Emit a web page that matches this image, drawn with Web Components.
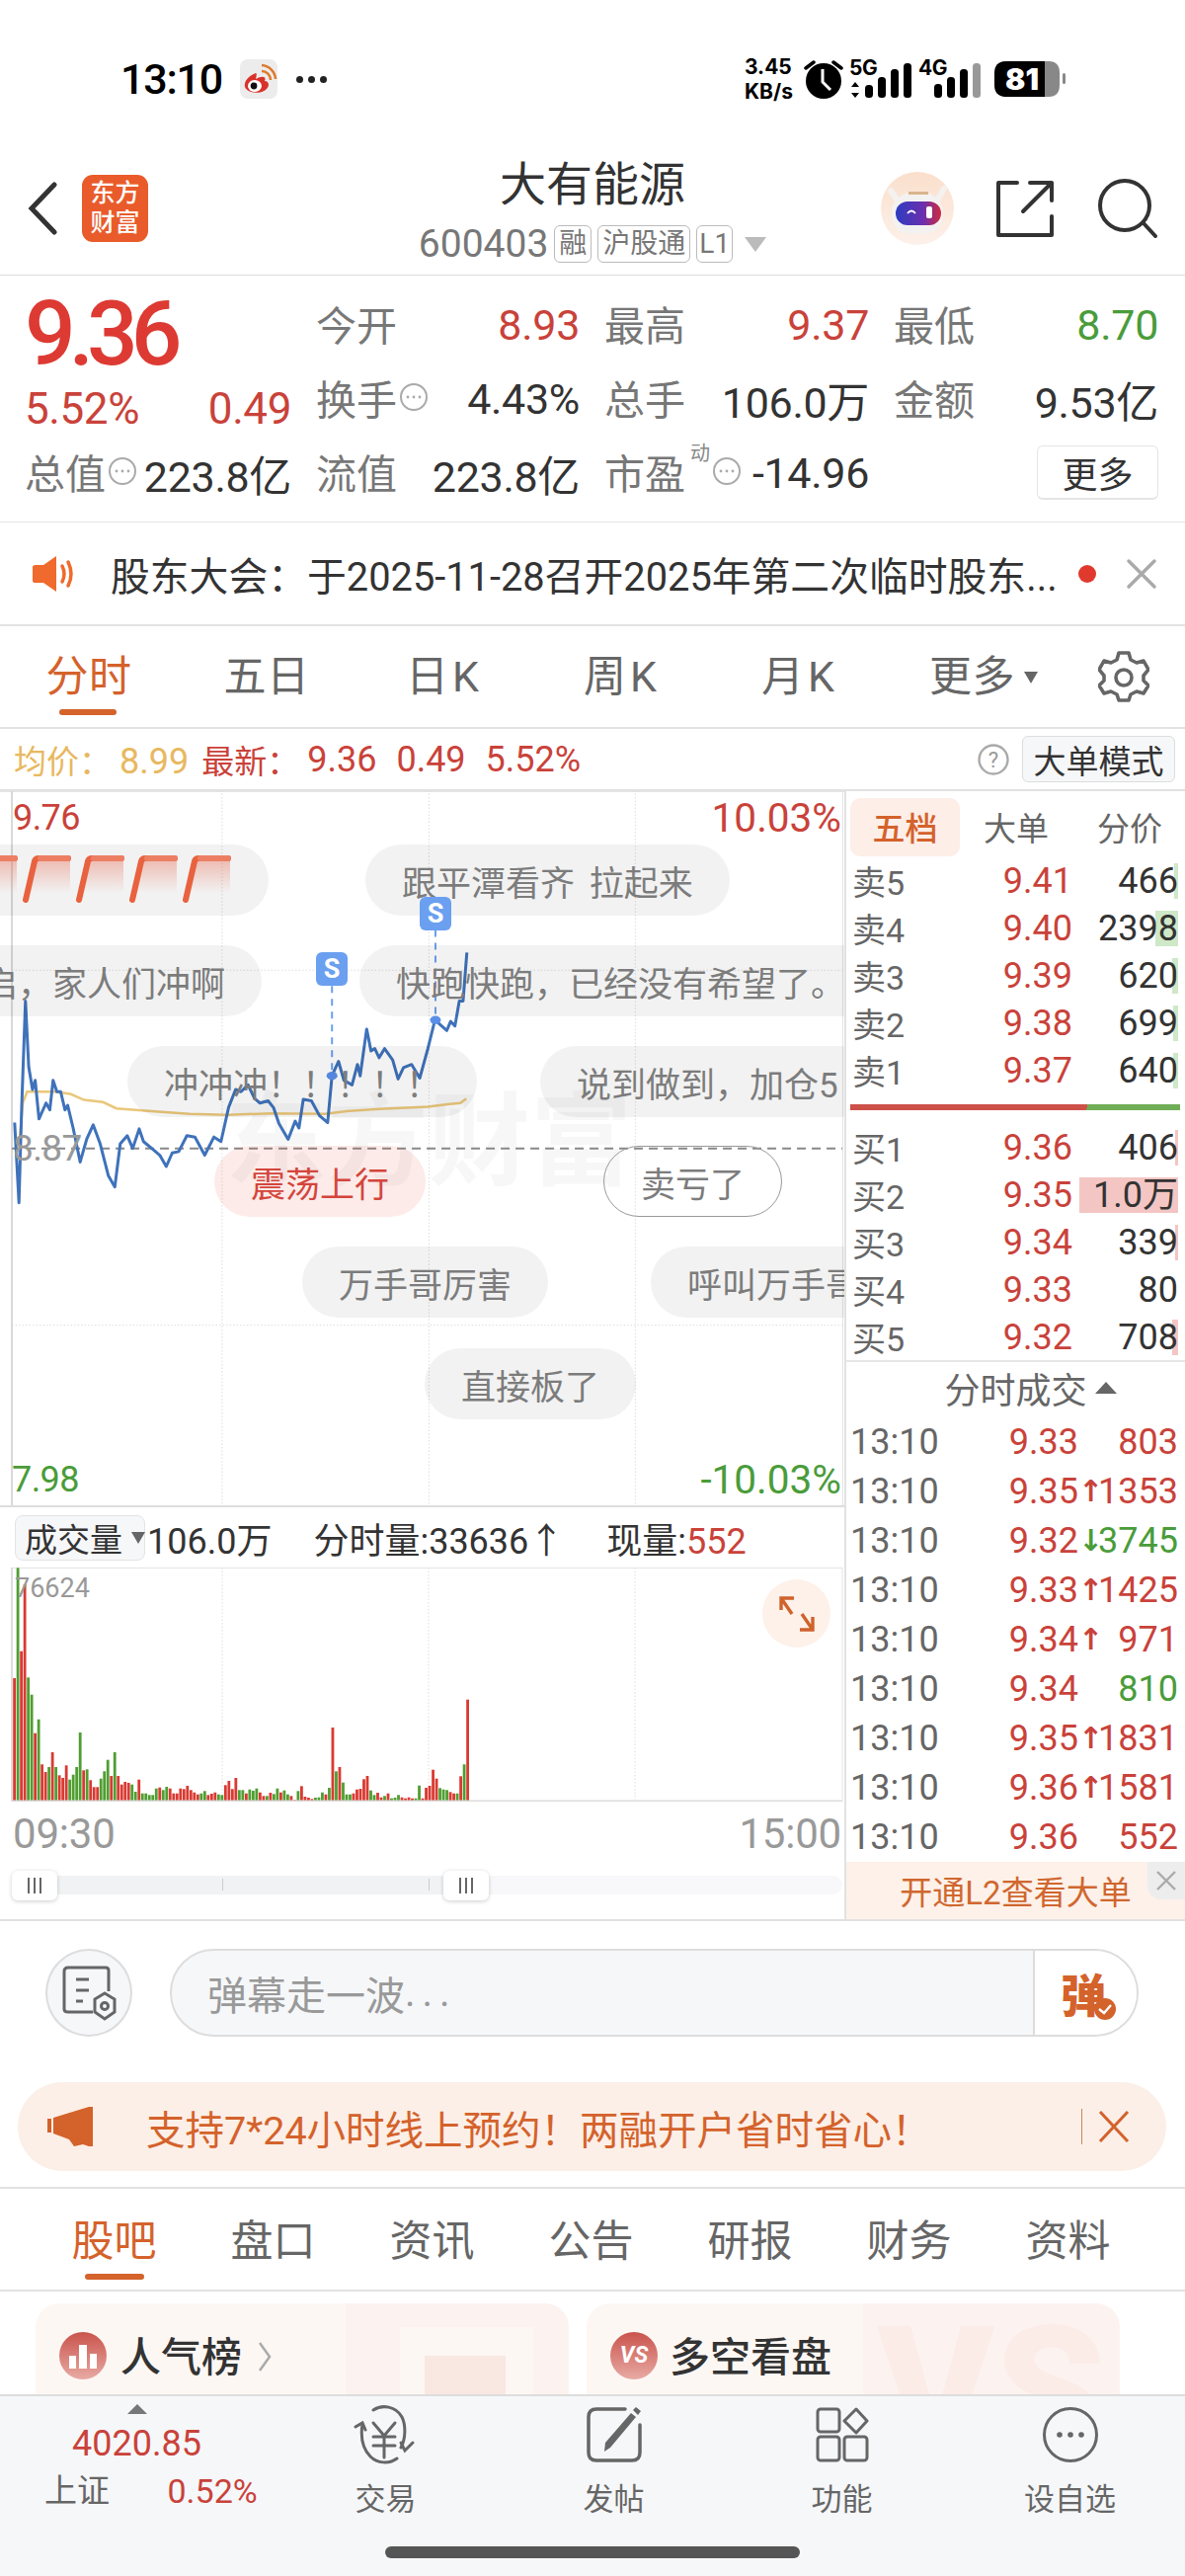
<!DOCTYPE html>
<html lang="zh-CN">
<head>
<meta charset="utf-8">
<title>大有能源</title>
<style>
  html, body { margin: 0; padding: 0; background: #fff; }
  body {
    width: 1200px; height: 2608px; overflow: hidden;
    font-family: Roboto, "Noto Sans CJK SC", sans-serif;
    color: #333;
    display: flex; flex-direction: column;
  }
</style>
</head>
<body>
<stock-status-bar></stock-status-bar>
<stock-header></stock-header>
<quote-panel></quote-panel>
<notice-bar></notice-bar>
<period-tabs></period-tabs>
<info-bar></info-bar>
<chart-area>
  <price-chart slot="chart">
    <danmaku-bubble x="-70" y="54"><bolt-row></bolt-row></danmaku-bubble>
    <danmaku-bubble x="370" y="54" style="word-spacing:6px">跟平潭看齐 拉起来</danmaku-bubble>
    <danmaku-bubble x="-54" y="156">启&#xFF0C;家人们冲啊</danmaku-bubble>
    <danmaku-bubble x="364" y="156">快跑快跑&#xFF0C;已经没有希望了。</danmaku-bubble>
    <danmaku-bubble x="129" y="258">冲冲冲&#xFF01;&#xFF01;&#xFF01;&#xFF01;&#xFF01;</danmaku-bubble>
    <danmaku-bubble x="547" y="258">说到做到&#xFF0C;加仓5</danmaku-bubble>
    <danmaku-bubble x="217" y="359" tone="hot">震荡上行</danmaku-bubble>
    <danmaku-bubble x="611" y="359" tone="outline">卖亏了</danmaku-bubble>
    <danmaku-bubble x="306" y="461">万手哥厉害</danmaku-bubble>
    <danmaku-bubble x="659" y="461">呼叫万手哥</danmaku-bubble>
    <danmaku-bubble x="430" y="564">直接板了</danmaku-bubble>
  </price-chart>
  <volume-chart slot="chart"></volume-chart>
  <depth-panel slot="side"></depth-panel>
</chart-area>
<danmaku-input></danmaku-input>
<promo-banner></promo-banner>
<sub-tabs></sub-tabs>
<feature-cards></feature-cards>
<bottom-nav>
  <nav-item label="交易">
    <svg slot="icon" width="66" height="60" viewBox="0 0 66 60" fill="none" stroke="#666" stroke-width="3" stroke-linecap="round">
      <path d="M20 5C29 -1 43 1 49 12C53 20 53 34 48 43"/>
      <path d="M44 54C36 60 24 59 17 52C9 44 7 32 9 19"/>
      <path d="M2 22L9 18L12 25"/>
      <path d="M63 38L55 46L51 38" transform="translate(-3 0)"/>
      <path d="M21 20L32 33L43 20M21 34H43M21 43H43M32 33V55" transform="translate(-1 -2)"/>
    </svg>
  </nav-item>
  <nav-item label="发帖">
    <svg slot="icon" width="56" height="56" viewBox="0 0 56 56" fill="none" stroke="#666" stroke-width="3.5" stroke-linecap="round">
      <path d="M39 2H10Q2 2 2 10V46Q2 54 10 54H46Q54 54 54 46V18"/>
      <path d="M19 36L45 6L50 10L24 41L18 45Z" fill="#666" stroke="none"/>
      <path d="M47 3L50 0L55 4L52 8Z" fill="#666" stroke="none"/>
    </svg>
  </nav-item>
  <nav-item label="功能">
    <svg slot="icon" width="54" height="56" viewBox="0 0 54 56" fill="none" stroke="#666" stroke-width="3">
      <rect x="2" y="2" width="22" height="23" rx="3"/>
      <path d="M41 2L52 14L41 26L29 14Z" stroke-linejoin="round"/>
      <rect x="2" y="30" width="22" height="24" rx="3"/>
      <rect x="29" y="30" width="23" height="24" rx="3"/>
    </svg>
  </nav-item>
  <nav-item label="设自选">
    <svg slot="icon" width="58" height="58" viewBox="0 0 58 58" fill="none" stroke="#666" stroke-width="3">
      <circle cx="29" cy="29" r="26.5"/>
      <circle cx="18" cy="29" r="2.8" fill="#666" stroke="none"/>
      <circle cx="29" cy="29" r="2.8" fill="#666" stroke="none"/>
      <circle cx="40" cy="29" r="2.8" fill="#666" stroke="none"/>
    </svg>
  </nav-item>
</bottom-nav>

<script>
const RED = '#c9423a';
const GREEN = '#4a9c3a';
const ORANGE = '#d4622b';

// little round "..." badge used next to quote labels
const INFO_DOTS = `<svg class="dots" width="30" height="30" viewBox="0 0 30 30" fill="none" stroke="#aaa" stroke-width="2">
  <circle cx="15" cy="15" r="13"/><circle cx="9" cy="15" r="1.4" fill="#aaa" stroke="none"/><circle cx="15" cy="15" r="1.4" fill="#aaa" stroke="none"/><circle cx="21" cy="15" r="1.4" fill="#aaa" stroke="none"/></svg>`;

class ShadowBase extends HTMLElement {
  constructor() {
    super();
    this.attachShadow({ mode: 'open' }).innerHTML = this.render();
  }
  render() { return ''; }
}

class StockStatusBar extends ShadowBase {
  render() {
    const bars = (xs, ys, lastGray) => xs.map((x, i) =>
      `<rect x="${x}" y="${ys[i]}" width="8" height="${37 - ys[i]}" rx="3.5" fill="${lastGray && i === xs.length - 1 ? '#999' : '#000'}"/>`).join('');
    return `<style>
      :host { display: flex; align-items: center; height: 150px; padding: 10px 120px 0 122px; box-sizing: border-box; color: #000; flex: none; }
      .time { font-size: 43px; font-weight: 500; letter-spacing: -1.2px; line-height: 1; width: 104px; }
      .weibo { margin-left: 17px; }
      .more { margin-left: 19px; display: flex; gap: 5px; }
      .more i { width: 7px; height: 7px; border-radius: 50%; background: #222; }
      .right { margin-left: auto; display: flex; align-items: center; font-family: Inter, Roboto, sans-serif; font-weight: 700; }
      .speed { display: flex; flex-direction: column; align-items: flex-start; font-size: 21px; line-height: 25px; width: 60px; }
      .sig { position: relative; width: 70px; height: 40px; }
      .sig span { position: absolute; top: -2px; left: 1px; font-size: 21px; line-height: 22px; letter-spacing: -.5px; }
      .sig svg { display: block; }
      .batt { position: relative; width: 73px; height: 36px; margin-left: 13px; }
      .batt b { position: absolute; inset: 0 22px 0 0; display: flex; align-items: center; justify-content: center; color: #fff; font-size: 30px; padding-left: 5px; }
    </style>
    <span class="time">13:10</span>
    <svg class="weibo" width="38" height="40" viewBox="0 0 38 40">
      <rect width="38" height="40" rx="8" fill="#ececec"/>
      <path d="M16 14C8 17 4 23 5 28C7 34 19 36 26 31C31 27 29 22 25 22C27 18 23 16 16 20C17 16 17 14 16 14Z" fill="#d8332b"/>
      <ellipse cx="15" cy="27" rx="7" ry="6" fill="#fff"/><circle cx="14" cy="27" r="3.4" fill="#111"/>
      <path d="M22 12A9 9 0 0 1 31 21M22 6A15 15 0 0 1 36 20" stroke="#e0792a" stroke-width="2.5" fill="none"/>
    </svg>
    <span class="more"><i></i><i></i><i></i></span>
    <div class="right">
      <div class="speed"><span>3.45</span><span>KB/s</span></div>
      <svg width="45" height="42" viewBox="0 0 45 42">
        <circle cx="20" cy="23" r="18" fill="#000"/>
        <path d="M19 11V24L27 32" stroke="#fff" stroke-width="3" fill="none"/>
        <path d="M2 10L10 4M38 10L30 4" stroke="#000" stroke-width="3.5" stroke-linecap="round"/>
      </svg>
      <div class="sig"><span>5G</span>
        <svg width="70" height="40" viewBox="0 0 70 40" style="position:absolute;top:2px;left:0">
          <path d="M7 21L11 26H3ZM7 37L3 32H11Z"/>${bars([17, 30, 43, 56], [24, 16, 8, 2])}
        </svg></div>
      <div class="sig" style="width:65px"><span>4G</span>
        <svg width="65" height="40" viewBox="0 0 65 40" style="position:absolute;top:2px;left:0">${bars([17, 30, 43, 56], [23, 16, 8, 2], true)}</svg></div>
      <div class="batt">
        <svg width="73" height="36" viewBox="0 0 73 36">
          <path d="M51 0H12Q0 0 0 12V24Q0 36 12 36H51Z" fill="#000"/>
          <path d="M51 0H55Q66 0 66 12V24Q66 36 55 36H51Z" fill="#888"/>
          <rect x="69" y="12" width="3" height="11" rx="1.5" fill="#888"/>
        </svg>
        <b>81</b>
      </div>
    </div>`;
  }
}

class StockHeader extends ShadowBase {
  render() {
    return `<style>
      :host { display: grid; grid-template-columns: 1fr auto 1fr; align-items: center; height: 129px; box-sizing: border-box; border-bottom: 1px solid #ddd; padding-bottom: 6px; flex: none; }
      .left { display: flex; align-items: center; padding-left: 28px; gap: 25px; }
      .logo { width: 67px; height: 68px; border-radius: 11px; background: #e95b2a; color: #fff; font-size: 25px; line-height: 30px; font-weight: 500; text-align: center; display: flex; align-items: center; justify-content: center; }
      .mid { align-self: start; text-align: center; display: flex; flex-direction: column; align-items: center; margin-top: 5px; }
      .title { font-size: 47px; line-height: 64px; color: #333; }
      .code { display: flex; align-items: center; gap: 6px; color: #777; font-size: 39px; line-height: 44px; margin-top: 6px; }
      .tag { font-size: 28px; line-height: 36px; padding: 0 4px; border: 1.5px solid #bbb; border-radius: 6px; color: #777; }
      .tag.sm { padding: 0 2px; }
      .caret { width: 0; height: 0; border: 11px solid transparent; border-top: 15px solid #bbb; border-bottom: 0; margin-left: 6px; }
      .right { display: flex; align-items: center; justify-content: flex-end; padding-right: 28px; }
    </style>
    <div class="left">
      <svg width="30" height="54" viewBox="0 0 30 54" fill="none" stroke="#333" stroke-width="5" stroke-linecap="round"><path d="M27 3L4 27L27 51"/></svg>
      <div class="logo">东方<br>财富</div>
    </div>
    <div class="mid">
      <div class="title">大有能源</div>
      <div class="code">600403<span class="tag">融</span><span class="tag">沪股通</span><span class="tag sm">L1</span><span class="caret"></span></div>
    </div>
    <div class="right">
      <svg width="76" height="76" viewBox="0 0 76 76" style="margin-right:41px">
        <defs>
          <linearGradient id="av" x1="0" y1="0" x2="0" y2="1"><stop offset="0" stop-color="#fadfcc"/><stop offset="1" stop-color="#fdf1ea"/></linearGradient>
          <linearGradient id="vis" x1="0" y1="0" x2="1" y2="0"><stop offset="0" stop-color="#2d3cc0"/><stop offset=".6" stop-color="#6a2fb0"/><stop offset="1" stop-color="#d02a3c"/></linearGradient>
        </defs>
        <circle cx="38" cy="38" r="37" fill="url(#av)"/>
        <path d="M11 20L18 30M65 18L58 30" stroke="#f4f1ef" stroke-width="6" stroke-linecap="round"/>
        <path d="M12 42C12 14 64 14 64 42C64 62 52 64 38 64C24 64 12 62 12 42Z" fill="#f4f2f1"/>
        <rect x="29" y="21" width="20" height="3" fill="#d9b48d"/>
        <rect x="16" y="31" width="46" height="24" rx="12" fill="url(#vis)"/>
        <path d="M28 43Q32 38 36 43" stroke="#fff" stroke-width="1.8" fill="none"/>
        <rect x="47" y="36" width="6" height="12" rx="2" fill="#fff"/>
      </svg>
      <svg width="60" height="60" viewBox="0 0 60 60" fill="none" stroke="#333" stroke-width="4" stroke-linecap="round" stroke-linejoin="round" style="margin-right:44px">
        <path d="M22 4H3V57H57V38"/><path d="M35 4H57V22M57 4L28 33"/>
      </svg>
      <svg width="60" height="60" viewBox="0 0 60 60" fill="none" stroke="#333" stroke-width="4" stroke-linecap="round"><circle cx="27" cy="27" r="25"/><path d="M46 45L58 58"/></svg>
    </div>`;
  }
}

class QuoteCell extends ShadowBase {
  render() {
    return `<style>
      :host { display: flex; align-items: center; justify-content: space-between; color: #333; font-size: 43px; letter-spacing: -.3px; white-space: nowrap; }
      .l { display: flex; align-items: center; color: #777; font-size: 41px; letter-spacing: 0; margin-top: -3px; }
    </style><span class="l"><slot name="label"></slot></span><span><slot></slot></span>`;
  }
}

class QuotePanel extends ShadowBase {
  render() {
    return `<style>
      :host { display: grid; grid-template-columns: 270px 267px 268px 268px; column-gap: 25px; grid-auto-rows: 75px; height: 250px; padding: 12px 0 0 25px; box-sizing: border-box; border-bottom: 1px solid #e5e5e5; flex: none; }
      .head { grid-row: span 2; display: flex; flex-direction: column; }
      .price { color: #dd3a33; font-size: 91px; line-height: 94px; font-weight: 500; letter-spacing: -7px; }
      .sub { display: flex; justify-content: space-between; color: ${RED}; font-size: 44px; line-height: 58px; letter-spacing: -.4px; }
      .r { color: ${RED}; } .g { color: ${GREEN}; }
      .dots { margin-left: 2px; }
      sup { font-size: 20px; line-height: 1; align-self: flex-start; margin-top: 2px; color: #888; margin-left: 5px; }
      .more { align-self: center; justify-self: end; width: 123px; height: 55px; border: 1px solid #e5e5e5; border-bottom-width: 2px; border-radius: 6px; font-size: 36px; color: #333; display: flex; align-items: center; justify-content: center; box-sizing: border-box; }
    </style>
    <div class="head"><div class="price">9.36</div><div class="sub"><span>5.52%</span><span>0.49</span></div></div>
    <quote-cell><span slot="label">今开</span><span class="r">8.93</span></quote-cell>
    <quote-cell><span slot="label">最高</span><span class="r">9.37</span></quote-cell>
    <quote-cell><span slot="label">最低</span><span class="g">8.70</span></quote-cell>
    <quote-cell><span slot="label" style="display:flex;align-items:center">换手${INFO_DOTS}</span>4.43%</quote-cell>
    <quote-cell><span slot="label">总手</span>106.0万</quote-cell>
    <quote-cell><span slot="label">金额</span>9.53亿</quote-cell>
    <quote-cell><span slot="label" style="display:flex;align-items:center">总值${INFO_DOTS}</span>223.8亿</quote-cell>
    <quote-cell><span slot="label">流值</span>223.8亿</quote-cell>
    <quote-cell><span slot="label" style="display:flex;align-items:center">市盈<sup>动</sup>${INFO_DOTS}</span>-14.96</quote-cell>
    <div class="more">更多</div>`;
  }
}

class NoticeBar extends ShadowBase {
  render() {
    return `<style>
      :host { display: flex; align-items: center; height: 105px; box-sizing: border-box; border-bottom: 2px solid #e2e2e2; padding: 0 28px 0 33px; flex: none; font-size: 39.8px; color: #333; white-space: nowrap; }
      .t { margin-left: 33px; }
      .dot { width: 18px; height: 18px; border-radius: 50%; background: #e03a2f; margin-left: auto; margin-right: 30px; }
    </style>
    <svg width="46" height="36" viewBox="0 0 46 36">
      <path d="M0 11Q0 9 3 9H11L24 0V36L11 27H3Q0 27 0 25Z" fill="#ef6a2c"/>
      <path d="M30 10Q34 18 30 26M36 6Q42 18 36 30" stroke="#ef6a2c" stroke-width="3.5" fill="none" stroke-linecap="round"/>
    </svg>
    <span class="t">股东大会&#xFF1A;于2025-11-28召开2025年第二次临时股东...</span>
    <span class="dot"></span>
    <svg width="32" height="32" viewBox="0 0 32 32" stroke="#aaa" stroke-width="3.5" stroke-linecap="round"><path d="M3 3L29 29M29 3L3 29"/></svg>`;
  }
}

class PeriodTabs extends ShadowBase {
  render() {
    return `<style>
      :host { display: flex; align-items: center; height: 104px; box-sizing: border-box; border-bottom: 2px solid #e2e2e2; flex: none; position: relative; font-size: 43px; color: #666; }
      .tab { width: 180px; text-align: center; flex: none; white-space: nowrap; position: relative; line-height: 60px; letter-spacing: .5px; }
      .tab:first-child { width: 178px; }
      .wide { letter-spacing: 4px; }
      .on { color: ${ORANGE}; }
      .on::after { content: ''; position: absolute; left: 60px; width: 58px; height: 6px; top: 63px; border-radius: 3px; background: ${ORANGE}; }
      .caret { display: inline-block; width: 0; height: 0; border: 7px solid transparent; border-top: 12px solid #666; border-bottom: 0; margin-left: 9px; vertical-align: 8px; }
    </style>
    <span class="tab on">分时</span><span class="tab">五日</span><span class="tab wide">日K</span><span class="tab wide">周K</span><span class="tab wide">月K</span>
    <span class="tab" style="width:192px">更多<i class="caret"></i></span>
    <svg width="52" height="52" viewBox="0 0 52 52" fill="none" stroke="#666" stroke-width="3.6" stroke-linejoin="round" style="margin-left:20px">
      <path d="M21 2H31L33 9L39 12L46 10L51 19L46 25V30L51 35L46 43L39 41L33 44L31 50H21L19 44L13 41L6 43L1 35L6 30V25L1 19L6 10L13 12L19 9Z"/>
      <circle cx="26" cy="27" r="8"/>
    </svg>`;
  }
}

class InfoBar extends ShadowBase {
  render() {
    return `<style>
      :host { display: flex; align-items: center; height: 63px; box-sizing: border-box; border-bottom: 2px solid #e2e2e2; padding: 0 10px 0 14px; flex: none; font-size: 36px; white-space: nowrap; }
      .cn { font-size: 33px; }
      .avg { color: #e8b860; margin-right: 13px; } .avg .cn { margin-right: 8px; }
      .r { color: ${RED}; margin-right: 20px; }
      .help { margin-left: auto; margin-right: 13px; }
      .btn { width: 155px; height: 47px; box-sizing: border-box; background: #f6f7f9; border: 1px solid #ddd; border-radius: 6px; color: #333; font-size: 33px; display: flex; align-items: center; justify-content: center; }
    </style>
    <span class="avg"><span class="cn">均价&#xFF1A;</span>8.99</span>
    <span class="r cn" style="margin-right:8px">最新&#xFF1A;</span><span class="r">9.36</span><span class="r">0.49</span><span class="r">5.52%</span>
    <svg class="help" width="32" height="32" viewBox="0 0 32 32"><circle cx="16" cy="16" r="14.5" fill="none" stroke="#aaa" stroke-width="2.4"/><text x="16" y="24" text-anchor="middle" font-size="22" fill="#999" font-family="Roboto">?</text></svg>
    <span class="btn">大单模式</span>`;
  }
}

class ChartArea extends ShadowBase {
  render() {
    return `<style>
      :host { display: flex; height: 1144px; box-sizing: border-box; border-bottom: 2px solid #e2e2e2; flex: none; }
      .main { width: 855px; flex: none; display: flex; flex-direction: column; overflow: hidden; }
      .side { flex: 1; min-width: 0; border-left: 2px solid #e2e2e2; box-sizing: border-box; }
    </style>
    <div class="main"><slot name="chart"></slot></div>
    <div class="side"><slot name="side"></slot></div>`;
  }
}

class DanmakuBubble extends ShadowBase {
  render() {
    return `<style>
      :host { position: absolute; display: flex; align-items: center; height: 72px; box-sizing: border-box; padding: 0 37px; border-radius: 36px; background: rgba(0,0,0,.05); color: #7c7c7c; font-size: 35px; white-space: nowrap; left: var(--x); top: var(--y); }
      :host([tone="hot"]) { background: rgba(232,70,55,.11); color: #d4453c; }
      :host([tone="outline"]) { background: none; border: 1px solid #999; padding: 0 37px; }
    </style><slot></slot>`;
  }
  connectedCallback() {
    this.style.setProperty('--x', this.getAttribute('x') + 'px');
    this.style.setProperty('--y', this.getAttribute('y') + 'px');
  }
}

// the row of red slanted strokes inside the first bubble
class BoltRow extends ShadowBase {
  render() {
    const one = (i) => `<g transform="translate(${i * 54} 0)">
      <path d="M12 3H50V38H4Z" fill="url(#fade)"/>
      <path d="M5 45L14 6Q15 3 18 3H48" fill="none" stroke="#e8623f" stroke-width="6" stroke-linecap="round"/>
      <path d="M20 3H48" fill="none" stroke="#ec7f63" stroke-width="6" stroke-linecap="round"/></g>`;
    return `<style>:host { display: block; width: 268px; height: 50px; } svg { display: block; overflow: visible; }</style>
    <svg width="268" height="50" viewBox="0 0 268 50"><defs><linearGradient id="fade" x1="0" y1="0" x2="0" y2="1"><stop offset="0" stop-color="#e8806c" stop-opacity=".5"/><stop offset="1" stop-color="#e8806c" stop-opacity="0"/></linearGradient></defs>
    ${[0, 1, 2, 3, 4].map(one).join('')}</svg>`;
  }
}

const PRICE_LINE = '27,733 35,910 40,700 47,465 53,610 60,660 65,640 72,725 85,690 92,705 98,640 105,665 112,665 120,705 125,695 135,745 148,820 160,770 172,738 185,780 200,850 212,875 222,780 235,762 245,790 257,747 265,775 285,795 295,805 307,830 318,800 330,797 345,762 360,765 378,805 395,765 408,775 422,700 435,660 445,665 458,650 470,680 480,690 495,685 505,700 515,735 532,770 545,730 552,745 560,682 575,685 590,718 605,733 613,630 625,598 635,640 650,650 660,605 665,630 677,527 685,575 692,570 700,590 710,570 725,595 735,637 745,612 760,605 775,635 790,570 803,507 825,530 832,510 840,520 848,465 855,465 862,358';
const AVG_LINE = '35,790 42,690 50,665 100,665 130,670 155,683 190,688 215,702 280,708 350,714 420,716 500,713 600,714 640,708 700,703 790,698 830,692 850,690 861,680';

class PriceChart extends ShadowBase {
  render() {
    // polylines are in the 1568x1575 space of the reference crop, squeezed to 860x723
    const v = (x, c = '#ddd') => `<line x1="${x}" x2="${x}" y1="0" y2="1580" stroke="${c}" stroke-width="1" stroke-dasharray="1.5 2" vector-effect="non-scaling-stroke"/>`;
    const h = (y) => `<line x1="22" x2="1555" y1="${y}" y2="${y}" stroke="#ddd" stroke-width="1" stroke-dasharray="1.5 2" vector-effect="non-scaling-stroke"/>`;
    return `<style>
      :host { display: block; position: relative; height: 723px; flex: none; overflow: hidden; }
      svg { position: absolute; left: 0; top: 0; }
      .label { position: absolute; font-size: 36px; line-height: 40px; letter-spacing: -.6px; }
      .pct { font-size: 40.5px; letter-spacing: 0; line-height: 44px; }
      .mark { position: absolute; width: 32px; height: 34px; border-radius: 6px; background: #6b9ff0; color: #fff; font-weight: 700; font-size: 27px; display: flex; align-items: center; justify-content: center; }
      .wm { position: absolute; left: 228px; top: 296px; font-size: 103px; line-height: 120px; font-weight: 700; color: rgba(0,0,0,.03); white-space: nowrap; }
    </style>
    <div class="wm">东方财富</div>
    <svg width="860" height="723" viewBox="0 2.18 1568 1575" preserveAspectRatio="none" fill="none">
      <line x1="0" x2="1568" y1="3" y2="3" stroke="#e2e2e2" vector-effect="non-scaling-stroke"/>
      <line x1="22" x2="22" y1="0" y2="1580" stroke="#d8d8d8" stroke-width="2" vector-effect="non-scaling-stroke"/>
      <line x1="1556" x2="1556" y1="0" y2="1580" stroke="#e2e2e2" stroke-width="1" vector-effect="non-scaling-stroke"/>
      ${v(410)}${v(792)}${v(1173)}${h(397)}${h(1180)}
      <line x1="22" x2="1555" y1="790" y2="790" stroke="#888" stroke-width="2" stroke-dasharray="9 6" vector-effect="non-scaling-stroke"/>
      <polyline points="${AVG_LINE}" stroke="#eac77a" stroke-width="2.5" vector-effect="non-scaling-stroke"/>
      <polyline points="${PRICE_LINE}" stroke="#3f72ba" stroke-width="3" stroke-linejoin="round" vector-effect="non-scaling-stroke"/>
      <line x1="613" x2="613" y1="432" y2="630" stroke="#6b9ff0" stroke-width="2" stroke-dasharray="7 6" vector-effect="non-scaling-stroke"/>
      <line x1="804" x2="804" y1="308" y2="507" stroke="#6b9ff0" stroke-width="2" stroke-dasharray="7 6" vector-effect="non-scaling-stroke"/>
      <ellipse cx="613" cy="630" rx="10" ry="9" fill="#5a8fe8"/>
      <ellipse cx="804" cy="507" rx="10" ry="9" fill="#5a8fe8"/>
    </svg>
    <slot></slot>
    <div class="mark" style="left:320px;top:163px">S</div>
    <div class="mark" style="left:425px;top:107px">S</div>
    <span class="label" style="left:13px;top:7px;color:${RED}">9.76</span>
    <span class="label pct" style="right:3px;top:5px;color:${RED}">10.03%</span>
    <span class="label" style="left:13px;top:342px;color:#999;font-size:37px">8.87</span>
    <span class="label" style="left:12px;top:677px;color:${GREEN}">7.98</span>
    <span class="label pct" style="right:3px;top:675px;color:${GREEN}">-10.03%</span>`;
  }
}

const VOL_TOPS = '535r 200g 453r 250r 533g 585g 702r 660g 797r 820r 805g 760r 805g 830r 838r 800r 843g 828g 805g 700g 815r 812g 845r 866r 866r 840g 818g 783g 832r 760g 832r 858r 850r 853r 858g 880g 843r 885g 885g 890g 890g 870g 867r 875g 865g 870r 885r 885r 870r 872r 862r 875r 882r 888r 885g 878g 890r 886r 882r 888g 890g 860r 847r 872r 838r 875g 875g 885r 873g 877g 870g 882r 893r 893g 883r 887g 870g 882r 876g 888g 893r 905r 878g 863r 895r 898r 902r 898g 897g 882g 888r 868g 685r 818g 805r 852g 888g 888g 885r 873r 871r 842r 832r 876g 890g 883r 897r 893g 885r 900g 898g 890g 897r 900r 897r 900r 900g 861g 900r 868r 862r 813r 840r 869g 873g 875g 881r 885r 885g 833r 797g 600r';

class VolumeChart extends ShadowBase {
  render() {
    const tops = VOL_TOPS.split(' ');
    const step = 459 / (tops.length - 1);
    const bars = tops.map((t, i) => {
      const top = parseInt(t);
      const color = t.endsWith('r') ? '#d93a32' : '#4f9e31';
      const barH = (910 - top) / 3;
      return `<rect x="${(13.2 + i * step).toFixed(2)}" y="${(237 - barH).toFixed(1)}" width="2.8" height="${barH.toFixed(1)}" fill="${color}"/>`;
    }).join('');
    const guide = (x) => `<line x1="${x}" x2="${x}" y1="0" y2="237" stroke="#ddd" stroke-dasharray="1.5 2"/>`;
    return `<style>
      :host { display: flex; flex-direction: column; flex: 1; min-height: 0; }
      .head { display: flex; align-items: center; height: 63px; box-sizing: border-box; padding-left: 15px; font-size: 36px; border-top: 2px solid #ddd; color: #333; white-space: nowrap; }
      .sel { width: 132px; height: 46px; box-sizing: border-box; background: #f6f7f9; border: 1px solid #e4e4e4; border-radius: 8px; font-size: 33px; display: flex; align-items: center; padding-left: 9px; margin-right: 2px; }
      .sel i { width: 0; height: 0; border: 7px solid transparent; border-top: 12px solid #666; border-bottom: 0; margin-left: 9px; }
      .plot { position: relative; height: 237px; flex: none; }
      .plot svg { display: block; }
      .max { position: absolute; left: 15px; top: 6px; font-size: 27px; line-height: 30px; color: #999; }
      .expand { position: absolute; left: 772px; top: 12px; width: 69px; height: 69px; border-radius: 50%; background: #fdf1e9; display: flex; align-items: center; justify-content: center; }
      .times { display: flex; justify-content: space-between; height: 65px; align-items: center; padding: 0 3px 0 13px; color: #999; font-size: 42px; letter-spacing: -.2px; }
      .slider { position: relative; margin: 10px 2px 0 12px; height: 19px; border-radius: 10px; background: #f8f8fa; }
      .slider .sel-range { position: absolute; left: 0; width: 437px; top: 0; bottom: 0; background: #f1f2f4; border-radius: 10px 0 0 10px; }
      .tick { position: absolute; top: 3px; height: 12px; width: 1px; background: #ccc; }
      .handle { position: absolute; top: -5px; width: 46px; height: 30px; background: #fff; border-radius: 6px; box-shadow: 0 1px 4px rgba(0,0,0,.2); display: flex; align-items: center; justify-content: center; gap: 4px; }
      .handle i { width: 2px; height: 16px; background: #666; }
    </style>
    <div class="head"><span class="sel">成交量<i></i></span>106.0万<span style="margin-left:42px">分时量:33636↑</span><span style="margin-left:43px">现量:<span style="color:${RED}">552</span></span></div>
    <div class="plot">
      <svg width="855" height="237" viewBox="0 0 855 237" fill="none">
        <line x1="12" x2="853" y1=".5" y2=".5" stroke="#e5e5e5"/>
        <line x1="12" x2="12" y1="0" y2="237" stroke="#ddd" stroke-width="2"/>
        <line x1="853" x2="853" y1="0" y2="237" stroke="#e5e5e5"/>
        ${guide(225)}${guide(434)}${guide(643)}
        ${bars}
        <line x1="12" x2="853" y1="236.5" y2="236.5" stroke="#ddd" stroke-width="2"/>
      </svg>
      <span class="max">76624</span>
      <span class="expand"><svg width="36" height="36" viewBox="0 0 36 36" fill="none" stroke="#d0622c" stroke-width="3.4"><path d="M2 14V2H15M2 2L13 18M34 21V34H21M34 34L23 18"/></svg></span>
    </div>
    <div class="times"><span>09:30</span><span>15:00</span></div>
    <div class="slider">
      <div class="sel-range"></div>
      <i class="tick" style="left:213px"></i><i class="tick" style="left:422px"></i>
      <div class="handle" style="left:0"><i></i><i></i><i></i></div>
      <div class="handle" style="left:437px"><i></i><i></i><i></i></div>
    </div>`;
  }
}

class DepthPanel extends ShadowBase {
  render() {
    const row = (label, price, vol, barW, barC) => `<div class="row"><span class="lb">${label}</span><span class="pr">${price}</span><span class="vol"><i style="width:${barW}px;background:${barC}"></i><b>${vol}</b></span></div>`;
    const sell = [['卖5', '9.41', '466', 4], ['卖4', '9.40', '2398', 23], ['卖3', '9.39', '620', 6], ['卖2', '9.38', '699', 5], ['卖1', '9.37', '640', 5]];
    const buy = [['买1', '9.36', '406', 3], ['买2', '9.35', '1.0万', 100], ['买3', '9.34', '339', 3], ['买4', '9.33', '80', 0], ['买5', '9.32', '708', 6]];
    const ticks = [['9.33', '', '803', 'r'], ['9.35', '↑', '1353', 'r'], ['9.32', '↓', '3745', 'g'], ['9.33', '↑', '1425', 'r'], ['9.34', '↑', '971', 'r'], ['9.34', '', '810', 'g'], ['9.35', '↑', '1831', 'r'], ['9.36', '↑', '1581', 'r'], ['9.36', '', '552', 'r']];
    return `<style>
      :host { display: flex; flex-direction: column; height: 100%; font-size: 36px; }
      .tabs { display: flex; height: 66px; padding: 6px 0 0 4px; box-sizing: border-box; align-items: center; color: #666; font-size: 33px; }
      .tabs .on { width: 111px; height: 59px; background: #fdeee8; color: ${ORANGE}; font-weight: 500; border-radius: 10px; display: flex; align-items: center; justify-content: center; margin-right: 24px; }
      .tabs span:last-child { margin-left: 49px; }
      .row { display: grid; grid-template-columns: 56px 167px 107px; height: 48px; align-items: center; padding-left: 6px; }
      .lb { color: #666; font-size: 34px; white-space: nowrap; } .pr { color: ${RED}; text-align: right; }
      .vol { position: relative; text-align: right; color: #333; height: 36px; line-height: 36px; white-space: nowrap; }
      .vol b { position: relative; font-weight: 400; }
      .vol i { position: absolute; right: 0; top: 0; bottom: 0; }
      .split { height: 6px; margin: 11px 5px 13px 4px; background: linear-gradient(100deg, #cd5148 0 71.7%, #6fae57 71.7%); flex: none; }
      .sep { border-top: 2px solid #e6e6e6; height: 58px; display: flex; align-items: center; justify-content: center; color: #666; box-sizing: border-box; gap: 8px; padding: 0 0 4px 30px; flex: none; }
      .sep i { width: 0; height: 0; border: 11px solid transparent; border-bottom: 12px solid #666; border-top: 0; }
      .tick { display: grid; grid-template-columns: 144px 87px 20px 81px; height: 50px; align-items: center; padding-left: 4px; flex: none; }
      .tick .t { color: #666; } .tick .p { color: ${RED}; text-align: right; }
      .tick .a { text-align: center; font-family: "DejaVu Sans", sans-serif; font-size: 30px; font-weight: 700; line-height: 30px; }
      .tick .v { text-align: right; }
      .r { color: ${RED}; } .g { color: ${GREEN}; }
      .foot { position: relative; margin-top: auto; height: 58px; background: #fdf1e9; color: #d0672f; display: flex; align-items: center; justify-content: center; white-space: nowrap; flex: none; font-size: 33px; }
      .close { position: absolute; right: 0; top: 0; width: 38px; height: 38px; background: #ededed; border-bottom-left-radius: 14px; display: flex; align-items: center; justify-content: center; }
    </style>
    <div class="tabs"><span class="on">五档</span><span>大单</span><span>分价</span></div>
    ${sell.map(r => row(r[0], r[1], r[2], r[3], '#cfe8c8')).join('')}
    <div class="split"></div>
    ${buy.map(r => row(r[0], r[1], r[2], r[3], '#f3c6c4')).join('')}
    <div class="sep">分时成交<i></i></div>
    ${ticks.map(t => `<div class="tick"><span class="t">13:10</span><span class="p">${t[0]}</span><span class="a ${t[3]}">${t[1]}</span><span class="v ${t[3]}">${t[2]}</span></div>`).join('')}
    <div class="foot">开通L2查看大单<span class="close"><svg width="22" height="22" viewBox="0 0 22 22" stroke="#aaa" stroke-width="2.4"><path d="M2 2L20 20M20 2L2 20"/></svg></span></div>`;
  }
}

class DanmakuInput extends ShadowBase {
  render() {
    return `<style>
      :host { display: flex; height: 163px; padding: 28px 47px 0 46px; box-sizing: border-box; flex: none; gap: 38px; }
      .round { width: 88px; height: 89px; border-radius: 50%; border: 2px solid #ddd; background: #f6f7f9; box-sizing: border-box; display: flex; align-items: center; justify-content: center; }
      .box { flex: 1; height: 89px; box-sizing: border-box; border: 2px solid #ddd; border-radius: 45px; display: flex; overflow: hidden; background: #f6f7f9; }
      .ph { flex: 1; padding-left: 36px; font-size: 40px; color: #999; display: flex; align-items: center; }
      .ph span { letter-spacing: 7px; }
      .send { width: 105px; background: #fff; border-left: 2px solid #ddd; position: relative; color: ${ORANGE}; font-weight: 900; font-size: 46px; display: flex; align-items: center; padding-left: 26px; box-sizing: border-box; margin-top: -2px; }
      .send svg { position: absolute; left: 60px; top: 50px; }
    </style>
    <span class="round"><svg width="56" height="56" viewBox="0 0 56 56" fill="none" stroke="#666" stroke-width="3">
      <path d="M48 26V5Q48 2 45 2H7Q3 2 3 6V44Q3 47 7 47H32"/><path d="M15 14H28M15 25H28M15 36H22"/>
      <path d="M44 28L54 34V47L44 54L34 47V34Z" fill="#f6f7f9"/><circle cx="44" cy="41" r="3.5"/></svg></span>
    <div class="box">
      <span class="ph">弹幕走一波<span>...</span></span>
      <span class="send">弹<svg width="22" height="22" viewBox="0 0 22 22"><circle cx="11" cy="11" r="11" fill="${ORANGE}"/><path d="M5 11L10 15L17 7" stroke="#fff" stroke-width="2.4" fill="none"/></svg></span>
    </div>`;
  }
}

class PromoBanner extends ShadowBase {
  render() {
    return `<style>
      :host { display: block; height: 108px; box-sizing: border-box; border-bottom: 2px solid #e2e2e2; padding: 0 19px 0 18px; flex: none; }
      .b { height: 90px; border-radius: 45px; background: #fcefe7; color: ${ORANGE}; display: flex; align-items: center; padding: 0 37px 0 30px; font-size: 39.5px; white-space: nowrap; }
      .t { margin-left: 54px; }
      .x { margin-left: auto; border-left: 1px solid #c9865f; padding-left: 16px; height: 36px; display: flex; align-items: center; }
    </style>
    <div class="b">
      <svg width="46" height="40" viewBox="0 0 46 40" fill="${ORANGE}"><path d="M0 12H4V26H0ZM6 11L42 0H46V40H42L36 38L27 40L22 33L6 27Z"/></svg>
      <span class="t">支持7*24小时线上预约&#xFF01;两融开户省时省心&#xFF01;</span>
      <span class="x"><svg width="32" height="32" viewBox="0 0 32 32" stroke="${ORANGE}" stroke-width="3"><path d="M2 1L30 31M30 1L2 31"/></svg></span>
    </div>`;
  }
}

class SubTabs extends ShadowBase {
  render() {
    const names = ['股吧', '盘口', '资讯', '公告', '研报', '财务', '资料'];
    return `<style>
      :host { display: grid; grid-template-columns: repeat(7, 161px); padding-left: 35px; height: 104px; box-sizing: border-box; border-bottom: 2px solid #e2e2e2; font-size: 43px; color: #666; flex: none; align-items: center; }
      span { text-align: center; position: relative; line-height: 60px; margin-top: 3px; }
      .on { color: ${ORANGE}; }
      .on::after { content: ''; position: absolute; left: 51px; top: 63px; width: 60px; height: 6px; border-radius: 3px; background: ${ORANGE}; }
    </style>${names.map((n, i) => `<span class="${i ? '' : 'on'}">${n}</span>`).join('')}`;
  }
}

class FeatureCards extends ShadowBase {
  render() {
    return `<style>
      :host { display: flex; gap: 18px; height: 104px; padding: 12px 0 0 36px; box-sizing: border-box; overflow: hidden; flex: none; }
      .card { position: relative; width: 540px; height: 140px; border-radius: 24px; background: #fdf7f4; overflow: hidden; flex: none; display: flex; align-items: flex-start; padding: 29px 0 0 24px; box-sizing: border-box; gap: 14px; font-size: 41px; font-weight: 500; color: #333; line-height: 50px; }
      .bg { position: absolute; right: 0; top: 0; }
      .ic { position: relative; width: 48px; height: 48px; border-radius: 50%; background: linear-gradient(#c9544c, #e8aaa4); color: #fff; font-size: 23px; font-weight: 700; display: flex; align-items: center; justify-content: center; flex: none; }
      .t { position: relative; margin-top: 1px; }
      .chev { position: relative; margin: 9px 0 0 2px; }
      .tint { position: absolute; right: 0; top: 0; width: 260px; height: 140px; background: #fbf0ec; opacity: .55; }
      .vs { position: absolute; right: 14px; top: 0; font-size: 180px; line-height: 180px; font-weight: 900; color: rgba(225,90,70,.045); }
    </style>
    <div class="card">
      <svg class="bg" width="226" height="140" viewBox="0 0 226 140">
        <rect x="0" y="0" width="226" height="140" fill="#fbf0ec" opacity=".55"/>
        <rect x="55" y="24" width="135" height="116" fill="#fdf7f4"/>
        <rect x="80" y="53" width="82" height="87" fill="#f9e7e2"/>
      </svg>
      <span class="ic"><svg width="30" height="28" viewBox="0 0 30 28" fill="#fff"><rect x="1" y="14" width="7" height="13"/><rect x="11" y="3" width="8" height="24"/><rect x="22" y="12" width="7" height="15"/></svg></span>
      <span class="t">人气榜</span>
      <svg class="chev" width="14" height="32" viewBox="0 0 14 32" fill="none" stroke="#aaa" stroke-width="2.5"><path d="M2 2L12 16L2 30"/></svg>
    </div>
    <div class="card">
      <div class="tint"></div>
      <span class="vs">VS</span>
      <span class="ic"><i>VS</i></span>
      <span class="t" style="margin-left:-2px">多空看盘</span>
    </div>`;
  }
}

class NavItem extends ShadowBase {
  render() {
    return `<style>
      :host { display: flex; flex-direction: column; align-items: center; color: #666; font-size: 31px; }
      .ic { height: 68px; display: flex; align-items: center; justify-content: center; margin-top: 5px; }
      .lb { line-height: 40px; margin-top: 12px; }
    </style><div class="ic"><slot name="icon"></slot></div><div class="lb"></div>`;
  }
  connectedCallback() {
    this.shadowRoot.querySelector('.lb').textContent = this.getAttribute('label');
  }
}

class BottomNav extends ShadowBase {
  render() {
    return `<style>
      :host { position: relative; display: grid; grid-template-columns: 275px repeat(4, 231px); height: 184px; box-sizing: border-box; background: #f6f7f9; border-top: 2px solid #ddd; flex: none; align-items: start; }
      .idx { display: grid; grid-template-columns: auto auto; justify-content: space-between; padding: 8px 12px 0 45px; color: ${RED}; font-size: 34px; }
      .tri { grid-column: 1 / 3; justify-self: center; margin-right: 31px; width: 0; height: 0; border: 10px solid transparent; border-bottom: 10px solid #777; border-top: 0; }
      .val { grid-column: 1 / 3; justify-self: center; margin-right: 31px; font-size: 36px; line-height: 44px; margin-top: 8px; }
      .nm { color: #666; font-size: 33px; line-height: 44px; margin-top: 4px; } .pc { line-height: 44px; margin-top: 4px; }
      .home { position: absolute; left: 390px; top: 152px; width: 420px; height: 12px; border-radius: 6px; background: #555; }
    </style>
    <div class="idx"><i class="tri"></i><span class="val">4020.85</span><span class="nm">上证</span><span class="pc">0.52%</span></div>
    <slot></slot><div class="home"></div>`;
  }
}

customElements.define('stock-status-bar', StockStatusBar);
customElements.define('stock-header', StockHeader);
customElements.define('quote-cell', QuoteCell);
customElements.define('quote-panel', QuotePanel);
customElements.define('notice-bar', NoticeBar);
customElements.define('period-tabs', PeriodTabs);
customElements.define('info-bar', InfoBar);
customElements.define('chart-area', ChartArea);
customElements.define('danmaku-bubble', DanmakuBubble);
customElements.define('bolt-row', BoltRow);
customElements.define('price-chart', PriceChart);
customElements.define('volume-chart', VolumeChart);
customElements.define('depth-panel', DepthPanel);
customElements.define('danmaku-input', DanmakuInput);
customElements.define('promo-banner', PromoBanner);
customElements.define('sub-tabs', SubTabs);
customElements.define('feature-cards', FeatureCards);
customElements.define('nav-item', NavItem);
customElements.define('bottom-nav', BottomNav);
</script>
</body>
</html>
